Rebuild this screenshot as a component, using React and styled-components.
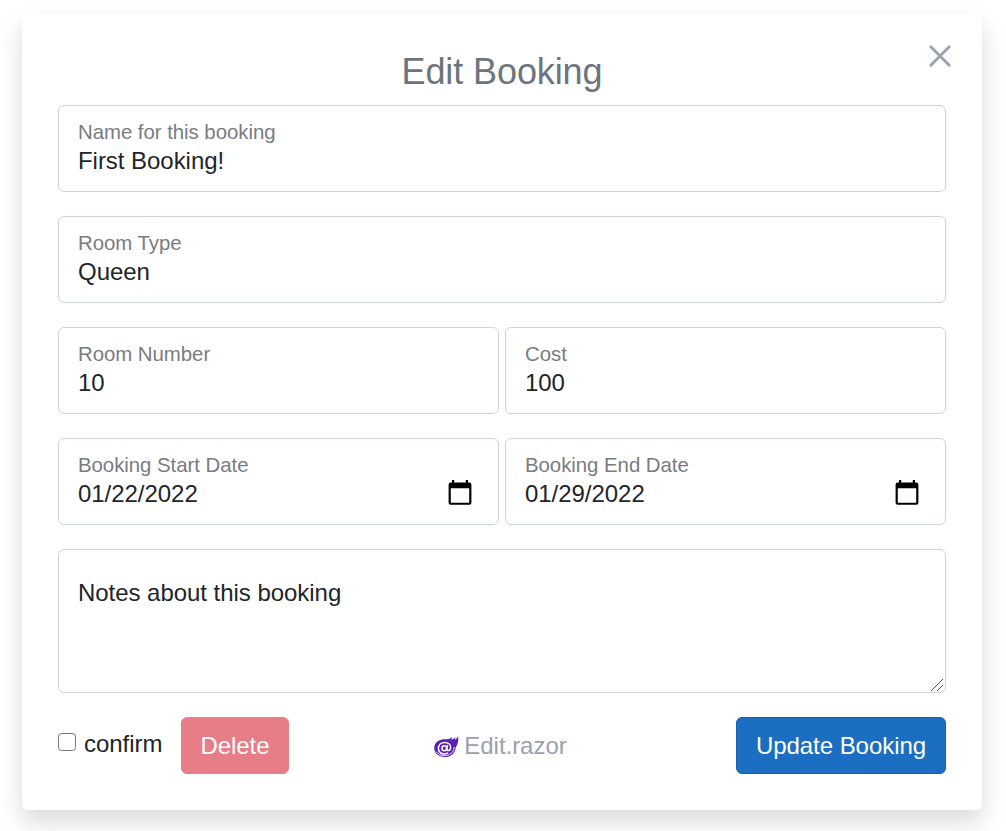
import React from "react";
import styled, { createGlobalStyle } from "styled-components";

const GlobalStyle = createGlobalStyle`
  *, *::before, *::after { box-sizing: border-box; }
  body {
    margin: 0;
    background: #fff;
    color: #212529;
    font-family: "Liberation Sans", Arial, sans-serif;
    font-size: 24px;
    line-height: 36px;
    letter-spacing: -0.04px;
    overflow: hidden;
  }
`;

const Page = styled.div`
  height: 831px;
  padding: 14px 24px 21px 22px;
`;

const Dialog = styled.section`
  display: flex;
  flex-direction: column;
  position: relative;
  height: 796px;
  padding: 36px;
  background: #fff;
  border-radius: 6px;
  box-shadow: 0 12px 24px rgba(0, 0, 0, 0.15);
`;

const Title = styled.h3`
  margin: 0 0 12px;
  color: #6c757d;
  font-size: 36px;
  font-weight: 400;
  line-height: 43px;
  letter-spacing: -0.1px;
  text-align: center;
`;

const CloseButton = styled.button`
  position: absolute;
  top: 30px;
  right: 30px;
  width: 24px;
  height: 24px;
  padding: 0;
  border: 0;
  background: none;

  svg { display: block; }
`;

const Form = styled.form`
  display: flex;
  flex-direction: column;
  gap: 24px;
`;

const Row = styled.div`
  display: grid;
  grid-template-columns: 1fr 1fr;
  gap: 6px;
`;

const Field = styled.label`
  display: flex;
  flex-direction: column;
  height: 87px;
  padding: 14px 19px 0;
  border: 1px solid #ced4da;
  border-radius: 6px;
`;

const Caption = styled.span`
  color: #7a7c7f;
  font-size: 20.4px;
  line-height: 24px;
`;

const Value = styled.span`
  display: flex;
  align-items: center;
  justify-content: space-between;
  height: 34px;
  line-height: 34px;
`;

const CalendarSvg = styled.svg`
  flex: none;
  margin: 0 7px 2px 0;
`;

const Notes = styled.textarea`
  display: block;
  width: 100%;
  height: 144px;
  padding: 25px 19px;
  border: 1px solid #ced4da;
  border-radius: 6px;
  background: #fff;
  color: inherit;
  font: inherit;
  letter-spacing: inherit;
  resize: none;
  outline: none;
`;

const NotesBox = styled.div`
  position: relative;
`;

const Grip = styled.svg`
  position: absolute;
  right: 3px;
  bottom: 2px;
`;

const Footer = styled.footer`
  display: grid;
  grid-template-columns: 1fr auto 1fr;
  align-items: center;
`;

const DeleteGroup = styled.div`
  display: flex;
  align-items: center;
  gap: 19px;
`;

const Confirm = styled.label`
  display: flex;
  align-items: center;
  width: 104px;
  height: 36px;
  gap: 8px;
  margin-top: -4px;
  white-space: nowrap;
`;

const CheckBox = styled.input`
  appearance: none;
  flex: none;
  width: 18px;
  height: 18px;
  margin: 0 0 4px;
  border: 1.5px solid #767676;
  border-radius: 3.5px;
  background: #fff;
`;

const Button = styled.button`
  justify-self: end;
  width: ${(p) => p.$width}px;
  height: 57px;
  padding: 1px 0 0;
  border: 1px solid ${(p) => (p.$danger ? "#e77d87" : "#1861ac")};
  border-radius: 6px;
  background: ${(p) => (p.$danger ? "#e77d87" : "#1b6ec2")};
  color: #fff;
  font: inherit;
  letter-spacing: inherit;
  white-space: nowrap;
`;

const FileLink = styled.span`
  display: flex;
  align-items: center;
  gap: 5px;
  margin-right: 3px;
  color: #9aa1b0;

  svg { margin-top: 2px; }
`;

function CalendarIcon() {
  return (
    <CalendarSvg width="24" height="26" viewBox="0 0 24 26">
      <path
        fill="#000"
        fillRule="evenodd"
        d="M4 0h2.2v2.4h11.6V0H20v2.4h1.4A2 2 0 0 1 23.4 4.4v18.4a2 2 0 0 1-2 2H2.6a2 2 0 0 1-2-2V4.4a2 2 0 0 1 2-2H4ZM2.8 8.2v14.5h18.4V8.2Z"
      />
    </CalendarSvg>
  );
}

function BlazorIcon() {
  return (
    <svg width="25" height="22" viewBox="0 0 25 22">
      <path
        fill="#5c1fb5"
        d="M24.3.2c.2 5-.6 8.500-2.600 11.300-.5 5.800-4.700 9.600-11.100 9.600C4.600 21.100.2 17.300.2 12.100.2 6.800 4.600 3.200 10 3.200c3.800 0 6.100.2 7.900-2.200 0 1.200-.2 1.900-.7 2.700 1.900-.4 3.100-1.300 4-2.600.1 1.100-.1 1.900-.6 2.700C22.300 3 23.500 1.800 24.300.2Z"
      />
      <g fill="none" stroke="#fff" strokeLinecap="round">
        <path strokeWidth="0.9" d="M20.200 11.500c-.3 4.700-4.300 8.100-9.700 8.100-3.700 0-6.400-1.300-7.900-3.600" />
        <path strokeWidth="1.500" d="M13.600 17.100c-4.800 2.100-9.200-.3-9.200-4.500 0-3.800 2.700-6.200 6.300-6.200 3.500 0 5.900 2.200 5.900 5 0 3.700-4.300 4.300-3.700 1.100l.5-3" />
        <ellipse cx="10.300" cy="12.200" rx="2.300" ry="2.500" strokeWidth="1.500" />
      </g>
    </svg>
  );
}

function TextField({ caption, value, date }) {
  return (
    <Field>
      <Caption>{caption}</Caption>
      <Value>
        {value}
        {date && <CalendarIcon />}
      </Value>
    </Field>
  );
}

export default function App() {
  return (
    <Page>
      <GlobalStyle />
      <Dialog>
        <Title>Edit Booking</Title>
        <CloseButton type="button" aria-label="Close">
          <svg width="24" height="24" viewBox="0 0 24 24">
            <path d="M2.800 2.800l18.400 18.400M21.200 2.800L2.800 21.200" stroke="#9ca3af" strokeWidth="3" strokeLinecap="round" />
          </svg>
        </CloseButton>
        <Form>
          <TextField caption="Name for this booking" value="First Booking!" />
          <TextField caption="Room Type" value="Queen" />
          <Row>
            <TextField caption="Room Number" value="10" />
            <TextField caption="Cost" value="100" />
          </Row>
          <Row>
            <TextField caption="Booking Start Date" value="01/22/2022" date />
            <TextField caption="Booking End Date" value="01/29/2022" date />
          </Row>
          <NotesBox>
            <Notes defaultValue="Notes about this booking" />
            <Grip width="12" height="12" viewBox="0 0 12 12">
              <path d="M0 12L12 0M6 12l6-6" stroke="#555" strokeWidth="1" />
            </Grip>
          </NotesBox>
          <Footer>
            <DeleteGroup>
              <Confirm>
                <CheckBox type="checkbox" />
                confirm
              </Confirm>
              <Button type="button" $danger $width={108}>Delete</Button>
            </DeleteGroup>
            <FileLink>
              <BlazorIcon />
              Edit.razor
            </FileLink>
            <Button type="button" $width={210}>Update Booking</Button>
          </Footer>
        </Form>
      </Dialog>
    </Page>
  );
}
